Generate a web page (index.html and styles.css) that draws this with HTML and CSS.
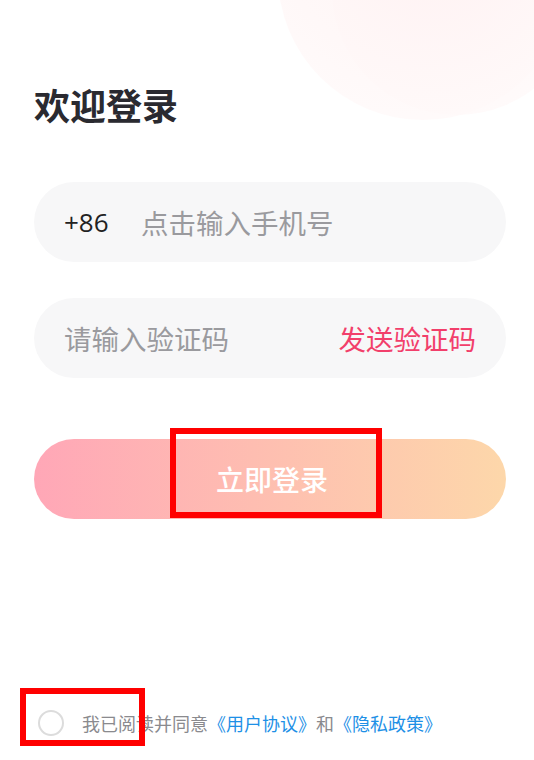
FILE: index.html
```html
<!DOCTYPE html>
<html>
	<head>
		<meta charset="utf-8" />
		<title>欢迎登录</title>
		<link rel="stylesheet" href="styles.css">
	</head>
	<body>
		<div class="page">
			<div class="deco deco1"></div>
			<div class="deco deco2"></div>
			<h1 class="title">欢迎登录</h1>
			<div class="field">
				<span class="code">+86</span>
				<span class="holder">点击输入手机号</span>
			</div>
			<div class="field field-sms">
				<span class="holder">请输入验证码</span>
				<a href="javascript:;" class="send">发送验证码</a>
			</div>
			<a href="javascript:;" class="loginBtn">立即登录</a>
			<div class="agree">
				<span class="radio"></span>
				<span class="agreeText">我已阅读并同意<a href="javascript:;">《用户协议》</a>和<a href="javascript:;">《隐私政策》</a></span>
			</div>
			<div class="mark mark1"></div>
			<div class="mark mark2"></div>
		</div>
	</body>
</html>
```

FILE: styles.css
```css
*{
	margin: 0;
	padding: 0;
	box-sizing: border-box;
}
body{
	background: #fff;
	font-family: "Noto Sans CJK SC", "Noto Sans", sans-serif;
}
a{
	text-decoration: none;
}
.page{
	position: relative;
	width: 534px;
	height: 760px;
	padding: 0 28px 0 34px;
	display: flex;
	flex-direction: column;
	overflow: hidden;
}
.deco{
	position: absolute;
	border-radius: 50%;
	z-index: 0;
}
.deco1{
	width: 290px;
	height: 290px;
	left: 278px;
	top: -170px;
	background: radial-gradient(circle at 50% 30%, #fff4f4 0%, #fff8f8 60%, #fffcfc 100%);
}
.deco2{
	width: 250px;
	height: 250px;
	left: 332px;
	top: -135px;
	background: radial-gradient(circle at 40% 30%, #fff1f2 0%, #fff8f8 70%, #fffcfc 100%);
	opacity: 0.8;
}
.title{
	position: relative;
	z-index: 1;
	margin-top: 78px;
	font-size: 36px;
	line-height: 52px;
	font-weight: 600;
	color: #2a2a30;
}
.field{
	position: relative;
	z-index: 1;
	height: 80px;
	border-radius: 40px;
	background: #f7f7f8;
	display: flex;
	align-items: center;
	padding: 0 30px;
	margin-top: 52px;
}
.field-sms{
	margin-top: 36px;
	justify-content: space-between;
}
.code{
	font-family: "Open Sans", "Noto Sans", sans-serif;
	font-size: 26px;
	color: #222;
	width: 77px;
}
.holder{
	font-size: 27.5px;
	color: #9a9a9e;
}
.send{
	font-size: 27.5px;
	color: #f23f6b;
}
.loginBtn{
	position: relative;
	z-index: 1;
	display: block;
	height: 80px;
	margin-top: 61px;
	border-radius: 40px;
	background: linear-gradient(to right, #ffa7b7, #fdd7aa);
	color: #fff;
	font-size: 28px;
	font-weight: 500;
	line-height: 80px;
	text-align: center;
	padding-left: 4px;
}
.agree{
	margin-top: auto;
	margin-bottom: 24px;
	margin-left: 4px;
	display: flex;
	align-items: center;
}
.radio{
	width: 26px;
	height: 26px;
	border: 2px solid #dcdcdc;
	border-radius: 50%;
	margin-right: 18px;
}
.agreeText{
	font-size: 18px;
	color: #8a8a8e;
}
.agreeText a{
	color: #1e90e6;
}
.mark{
	position: absolute;
	border: 6px solid #f00;
	z-index: 5;
}
.mark1{
	left: 170px;
	top: 428px;
	width: 212px;
	height: 90px;
}
.mark2{
	left: 20px;
	top: 688px;
	width: 125px;
	height: 58px;
}
```
